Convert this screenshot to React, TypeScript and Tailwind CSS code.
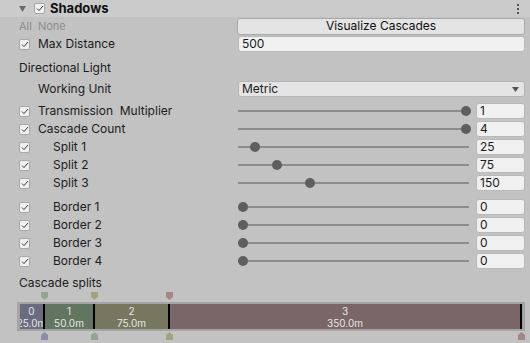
import React from "react";

const Check = () => (
  <div className="flex h-[11px] w-[11px] shrink-0 items-center justify-center rounded-[2px] border border-[#a7a7a7] bg-[#f0f0f0]">
    <svg width="8" height="7" viewBox="0 0 8 7">
      <path d="M1 3.6 L3 5.6 L7 1" fill="none" stroke="#3a3a3a" strokeWidth="1" />
    </svg>
  </div>
);

const ValueBox = ({ value, className = "" }: { value: string; className?: string }) => (
  <div
    className={`flex h-[16px] items-center rounded-[3px] border border-[#b9b9b9] bg-[#f0f0f0] pl-[3px] text-[12px] text-[#1a1a1a] ${className}`}
  >
    {value}
  </div>
);

// position is 0..1 along the slider track
const Slider = ({ position }: { position: number }) => (
  <div className="relative h-[16px] flex-1">
    <div className="absolute left-0 right-0 top-[7px] h-[2px] bg-[#8c8c8c]" />
    <div
      className="absolute top-[3px] h-[10px] w-[10px] rounded-full bg-[#5e5e5e]"
      style={{ left: `${position * 223}px` }}
    />
  </div>
);

const SliderRow = ({
  label,
  indent = false,
  position,
  value,
}: {
  label: string;
  indent?: boolean;
  position: number;
  value: string;
}) => (
  <div className="flex h-[18px] items-center pl-[19px] pr-[5px]">
    <div className="flex w-[219px] items-center">
      <Check />
      <span className={`whitespace-pre ${indent ? "ml-[23px]" : "ml-[8px]"}`}>{label}</span>
    </div>
    <Slider position={position} />
    <ValueBox value={value} className="ml-[7px] w-[49px]" />
  </div>
);

const Marker = ({ color, up = false, left }: { color: string; up?: boolean; left: number }) => (
  <svg className="absolute" style={{ left: `${left - 3.5}px` }} width="7" height="8" viewBox="0 0 7 8">
    <path d={up ? "M0 8 V3 L3.5 0 L7 3 V8 Z" : "M0 0 H7 V5 L3.5 8 L0 5 Z"} fill={color} />
  </svg>
);

const segments = [
  { id: "0", dist: "25.0m", width: 23, color: "bg-[#6a6b80]" },
  { id: "1", dist: "50.0m", width: 48, color: "bg-[#617561]" },
  { id: "2", dist: "75.0m", width: 73, color: "bg-[#77765e]" },
  { id: "3", dist: "350.0m", width: 350, color: "bg-[#7a6666]" },
];

export default function App() {
  return (
    <div
      className="h-[343px] w-[530px] overflow-hidden bg-[#c2c2c2] text-[12px] text-[#1c1c1c]"
      style={{ fontFamily: "Inter, 'Noto Sans', sans-serif" }}
    >
      {/* Header */}
      <div className="flex h-[17px] items-center bg-[#cbcbcb] pl-[19px] pr-[11px]">
        <svg width="7" height="6" viewBox="0 0 7 6">
          <path d="M0 0 H7 L3.5 6 Z" fill="#6b6b6b" />
        </svg>
        <div className="ml-[8px]">
          <Check />
        </div>
        <span className="ml-[5px] text-[13px] font-bold text-[#111]">Shadows</span>
        <div className="ml-auto flex flex-col gap-[2px]">
          <div className="h-[2px] w-[2px] bg-[#555]" />
          <div className="h-[2px] w-[2px] bg-[#555]" />
          <div className="h-[2px] w-[2px] bg-[#555]" />
        </div>
      </div>

      {/* All / None + Visualize */}
      <div className="flex h-[18px] items-center pl-[19px] pr-[5px]">
        <div className="flex w-[218px] gap-[6px] text-[11px] text-[#8d8d8d]">
          <span>All</span>
          <span>None</span>
        </div>
        <div className="flex h-[17px] flex-1 items-center justify-center rounded-[3px] border border-[#a9a9a9] bg-[#e4e4e4] text-[12px] text-[#111]">
          Visualize Cascades
        </div>
      </div>

      {/* Max Distance */}
      <div className="flex h-[18px] items-center pl-[19px] pr-[5px]">
        <div className="flex w-[219px] items-center">
          <Check />
          <span className="ml-[8px]">Max Distance</span>
        </div>
        <ValueBox value="500" className="flex-1" />
      </div>

      <div className="mt-[6px] flex h-[18px] items-center pl-[19px]">Directional Light</div>

      <div className="mt-[3px] flex h-[18px] items-center pl-[38px] pr-[5px]">
        <div className="w-[200px]">Working Unit</div>
        <div className="flex h-[16px] flex-1 items-center justify-between rounded-[3px] border border-[#b5b5b5] bg-[#e4e4e4] pl-[3px] pr-[5px]">
          <span>Metric</span>
          <svg width="7" height="5" viewBox="0 0 7 5">
            <path d="M0 0 H7 L3.5 5 Z" fill="#555" />
          </svg>
        </div>
      </div>

      <div className="mt-[4px]">
        <SliderRow label="Transmission  Multiplier" position={1} value="1" />
        <SliderRow label="Cascade Count" position={1} value="4" />
        <SliderRow label="Split 1" indent position={0.054} value="25" />
        <SliderRow label="Split 2" indent position={0.152} value="75" />
        <SliderRow label="Split 3" indent position={0.3} value="150" />
      </div>

      <div className="mt-[6px]">
        <SliderRow label="Border 1" indent position={0} value="0" />
        <SliderRow label="Border 2" indent position={0} value="0" />
        <SliderRow label="Border 3" indent position={0} value="0" />
        <SliderRow label="Border 4" indent position={0} value="0" />
      </div>

      <div className="mt-[4px] flex h-[18px] items-center pl-[19px]">Cascade splits</div>

      {/* Cascade bar */}
      <div className="pl-[17px] pr-[5px]">
        <div className="relative h-[9px]">
          <Marker color="#8fa88d" left={27} />
          <Marker color="#a3a37f" left={77} />
          <Marker color="#a88585" left={152} />
        </div>
        <div className="mt-[1px] bg-[#a4a4a4] px-[3px] py-[2px]">
          <div className="flex h-[25px]">
            {segments.map((s) => (
              <div
                key={s.id}
                className={`flex flex-col items-center overflow-hidden whitespace-nowrap border-r-2 border-black pt-[1px] text-[10px] leading-[12px] text-[#e6e6e6] ${s.color}`}
                style={{ width: `${s.width + 2}px` }}
              >
                <span>{s.id}</span>
                <span>{s.dist}</span>
              </div>
            ))}
          </div>
        </div>
        <div className="relative mt-[1px] h-[9px]">
          <Marker color="#8d8daa" up left={27} />
          <Marker color="#8fa88d" up left={77} />
          <Marker color="#a3a37f" up left={152} />
          <Marker color="#a88585" up left={504} />
        </div>
      </div>
    </div>
  );
}
